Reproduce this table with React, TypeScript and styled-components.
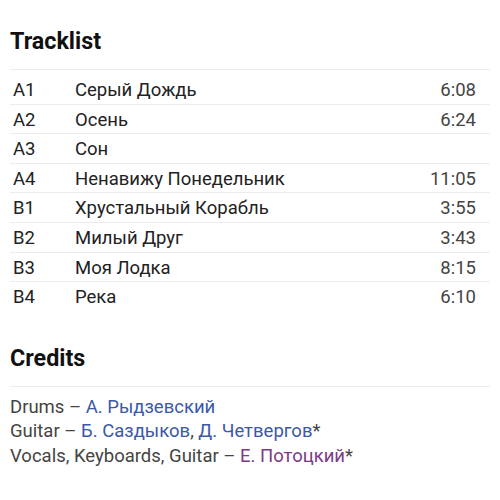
import React from "react";
import styled, { createGlobalStyle } from "styled-components";

const Global = createGlobalStyle`
  html, body { margin: 0; padding: 0; background: #fff; }
  body { font-family: Roboto, "Noto Sans", "Liberation Sans", sans-serif; }
`;

const Page = styled.div`
  padding: 27px 10px 0 10px;
`;

const Section = styled.section<{ $gap?: number }>`
  margin-top: ${(p) => p.$gap ?? 0}px;
`;

const Heading = styled.h2`
  margin: 0;
  font-size: 23.3px;
  font-weight: 700;
  line-height: 28px;
  color: #111;
  padding-bottom: 14px;
  border-bottom: 1px solid #ececec;
`;

const Table = styled.div`
  margin-top: 5px;
  display: flex;
  flex-direction: column;
`;

const Row = styled.div<{ $last?: boolean }>`
  display: grid;
  grid-template-columns: 65px 1fr auto;
  padding-top: 2px;
  line-height: 26.6px;
  font-size: 18.5px;
  color: #222;
  border-bottom: ${(p) => (p.$last ? "none" : "1px solid #ececec")};
`;

const Pos = styled.span`
  padding-left: 3px;
`;

const Title = styled.span``;

const Duration = styled.span`
  padding-right: 14px;
  color: #444;
  text-align: right;
`;

const Credits = styled.div`
  margin-top: 8px;
  font-size: 18.5px;
  line-height: 24.5px;
  color: #444;
`;

const Line = styled.div``;

const Artist = styled.a<{ $visited?: boolean }>`
  color: ${(p) => (p.$visited ? "#7b3a86" : "#3b58ab")};
  text-decoration: none;
`;

const tracks = [
  ["A1", "Серый Дождь", "6:08"],
  ["A2", "Осень", "6:24"],
  ["A3", "Сон", ""],
  ["A4", "Ненавижу Понедельник", "11:05"],
  ["B1", "Хрустальный Корабль", "3:55"],
  ["B2", "Милый Друг", "3:43"],
  ["B3", "Моя Лодка", "8:15"],
  ["B4", "Река", "6:10"],
];

export default function App() {
  return (
    <>
      <Global />
      <Page>
        <Section>
          <Heading>Tracklist</Heading>
          <Table>
            {tracks.map(([p, t, d], i) => (
              <Row key={p} $last={i === tracks.length - 1}>
                <Pos>{p}</Pos>
                <Title>{t}</Title>
                <Duration>{d}</Duration>
              </Row>
            ))}
          </Table>
        </Section>
        <Section $gap={33}>
          <Heading>Credits</Heading>
          <Credits>
            <Line>
              Drums – <Artist href="#">А. Рыдзевский</Artist>
            </Line>
            <Line>
              Guitar – <Artist href="#">Б. Саздыков</Artist>,{" "}
              <Artist href="#">Д. Четвергов</Artist>*
            </Line>
            <Line>
              Vocals, Keyboards, Guitar – <Artist href="#" $visited>Е. Потоцкий</Artist>*
            </Line>
          </Credits>
        </Section>
      </Page>
    </>
  );
}
